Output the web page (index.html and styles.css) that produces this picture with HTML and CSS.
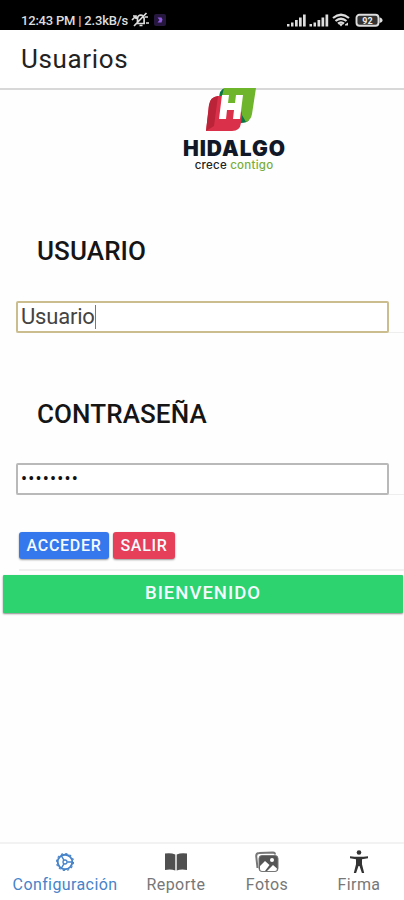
FILE: index.html
```
<!DOCTYPE html>
<html lang="es">
<head>
<meta charset="utf-8">
<title>Usuarios</title>
<link rel="stylesheet" href="styles.css">
</head>
<body>
<div class="status">
  <span class="status-text">12:43 PM | 2.3kB/s</span>
  <svg class="mute" width="19" height="16" viewBox="0 0 19 16" fill="none" stroke="#ddd" stroke-width="1.700"><path d="M5 11.500h9M6.500 11V6.500a3.300 3.300 0 0 1 6.600 0V11M8.500 13.500h3M15.500 1 3 14M1 8l3-3M2 4h3v3M14 5l3 0M15 11h3"/></svg>
  <svg class="app" width="12" height="12" viewBox="0 0 12 12"><rect width="12" height="12" rx="2" fill="#25173d"/><path d="M3.500 3.500h4l1 2-1 3h-4l2-2.500z" fill="#8c59dc"/></svg>
  <svg class="signals" width="96" height="14" viewBox="0 0 96 14">
    <g fill="#ddd"><path id="bars" d="M0 11h2.500v2.500H0zM4 9.500h2.500v4H4zM8 7h2.700v6.500H8zM12 4.500h2.700v9H12zM16 1.500h2.700v12H16z"/><use href="#bars" x="22.500"/></g>
    <g fill="none" stroke="#ddd" stroke-width="2.200"><path d="M46 5q8-6.500 16 0M48.500 8q5.500-4.500 11 0M51 10.700q3-2.500 6 0"/></g>
    <path d="m51.500 10.500 2.500 3 2.500-3zM58 11.500l3-2v3h-3z" fill="#ddd"/>
    <rect x="69.500" y="1.700" width="22" height="11" rx="3" fill="#333" stroke="#ddd" stroke-width="1.900"/><path d="M92.500 4.500q3 .5 3 2.700t-3 2.700z" fill="#ddd"/>
    <text x="80.500" y="10.500" class="charge">92</text>
  </svg>
</div>
<header><h1>Usuarios</h1></header>
<main>
  <div class="logo">
    <svg width="52" height="44" viewBox="0 0 52 44">
      <path d="M14 12q0-11 6-12h8l9 24 7 8q-2 3-8 3H16z" fill="#087344"/>
      <path d="M19 0h32l-4 26q-1 6-6 8l-4-7-2-9H22l1-10h-6z" fill="#6fb52c"/>
      <path d="M1 43 4 17q1-8 9-9h5l2 10h15l2 10-1 7q-1 8-9 8z" fill="#da3049"/>
      <path d="M1 43 4 17q1-8 9-9L9 38z" fill="#ba2338"/>
      <path d="M17 7h7l-1 8h7l1-8h7l-3 24h-7l1-9h-7l-1 9h-7z" fill="#fff"/>
    </svg>
    <div class="word">HIDALGO</div>
    <div class="slogan">crece <span>contigo</span></div>
  </div>
  <h2 class="label">USUARIO</h2>
  <div class="row"><div class="field focused">Usuario<i class="caret"></i></div></div>
  <h2 class="label second">CONTRASEÑA</h2>
  <div class="row"><div class="field password">••••••••</div></div>
  <div class="actions"><button class="primary">ACCEDER</button><button class="danger">SALIR</button></div>
  <button class="welcome">BIENVENIDO</button>
</main>
<nav>
  <a class="tab active"><svg width="20" height="20" viewBox="0 0 20 20" fill="none" stroke="#4783c9"><circle cx="10" cy="10" r="7.300" stroke-width="1.900"/><circle cx="10" cy="10" r="8.500" stroke-width="1.100" stroke-dasharray="2.200 2.250"/><circle cx="10" cy="10" r="2" stroke-width="1.300"/><path d="M12.200 10h5M8.900 8.100 6.300 3.700M8.900 11.900l-2.600 4.400" stroke-width="1.400"/></svg><span>Configuración</span></a>
  <a class="tab report"><svg width="22" height="20" viewBox="0 0 22 20" fill="#505050"><path d="M0 1.500q6-1 10.300 1v16Q6 17 0 18zM22 1.500q-6-1-10.300 1v16Q16 17 22 18z"/></svg><span>Reporte</span></a>
  <a class="tab photos"><svg width="24" height="22" viewBox="0 0 24 22"><path d="M2.500 17 1.200 5q0-3 3-3L18 1.500q2 0 2 2" fill="none" stroke="#777" stroke-width="2"/><rect x="4" y="4.500" width="19" height="16" rx="3" fill="#555" stroke="#777"/><path d="m5 15 5-5 4.500 4L10 20H7q-2 0-2-2zM12 20l6-6 4 3.500q0 2.500-2 2.500z" fill="#fff"/><circle cx="17" cy="9" r="2" fill="#fff"/></svg><span>Fotos</span></a>
  <a class="tab sign"><svg width="20" height="24" viewBox="0 0 20 24" fill="#333"><circle cx="10" cy="2.500" r="2.300"/><path d="M1 6.300q9 1 18 0v2l-6 1v5l2.200 8.700h-2.300L10.500 16h-1L7.100 23H4.800L7 14.300v-5l-6-1z"/></svg><span>Firma</span></a>
</nav>
</body>
</html>
```
FILE: styles.css
```
* { box-sizing: border-box; }
body { margin: 0; width: 404px; height: 900px; overflow: hidden; display: flex; flex-direction: column; background: #fefefe; font-family: Roboto, sans-serif; color: #151515; }
h1, h2 { margin: 0; }
svg { display: block; flex: none; }
button { border: 0; padding: 0; font: 500 16px/1 Roboto, sans-serif; color: #f5faff; }
.status { height: 30px; flex: none; background: #000; color: #ddd; display: flex; align-items: flex-start; padding: 12px 21px 0; }
.status-text { font: 500 13px/17px Roboto, sans-serif; letter-spacing: -.2px; width: 109px; white-space: nowrap; }
.mute { margin-left: 1px; }
.app { margin: 2px 0 0 4px; }
.signals { margin: 1px 0 0 auto; }
.charge { font: 700 9px Roboto, sans-serif; fill: #eee; text-anchor: middle; }
header { height: 60px; flex: none; border-bottom: 2px solid #d8d8d8; background: #fff; padding: 13px 21px 0; }
h1 { font-size: 26px; line-height: 32px; font-weight: 400; letter-spacing: .65px; color: #222; }
main { flex: 1; display: flex; flex-direction: column; }
.logo { margin: -2px 0 0 182px; width: 104px; height: 88px; position: relative; display: flex; flex-direction: column; align-items: center; }
.logo svg { margin-right: 6px; }
.word { font: 900 21px/20px Inter, sans-serif; margin-top: 7px; white-space: nowrap; letter-spacing: 1px; margin-right: -1px; color: #111827; }
.slogan { font: 500 11.500px/12px Inter, sans-serif; letter-spacing: .25px; white-space: nowrap; color: #222; }
.slogan span { color: #78ad3b; }
.label { margin: 59px 0 0 37px; height: 32px; font-size: 26px; line-height: 32px; font-weight: 500; letter-spacing: .1px; color: #151515; }
.row { margin: 34px 0 0 16px; height: 32px; border-bottom: 1px solid #eee; }
.field { width: 373px; height: 32px; border: 2px solid #b9b9b9; border-radius: 2px; background: #fff; padding-left: 3px; font-size: 22px; line-height: 28px; letter-spacing: -.2px; color: #444; display: flex; align-items: center; }
.focused { border-color: #cbbd8e; }
.caret { width: 1px; height: 24px; background: #777; }
.label.second { margin-top: 65px; }
.label.second + .row { margin-top: 33px; }
.password { color: #111; font-size: 18px; letter-spacing: 1.180px; }
.actions { display: flex; gap: 4px; margin: 37px 0 0 19px; height: 39px; border-bottom: 2px solid #f0f0f0; }
.actions button { height: 27px; border-radius: 3px; letter-spacing: .7px; box-shadow: 0 1px 2px #999; }
.primary { width: 90px; background: #3578ed; }
.danger { width: 62px; background: #e53f59; }
.welcome { margin: 4px 1px 0 3px; height: 38px; padding-bottom: 2px; background: #2dd36f; font-size: 18.500px; letter-spacing: 1px; border-radius: 1px; box-shadow: 0 1px 2px #888; }
nav { height: 58px; flex: none; border-top: 2px solid #f2f2f2; background: #fff; display: grid; grid-template-columns: 130px 92px 90px 92px; }
.tab { display: flex; flex-direction: column; align-items: center; color: #777; font-size: 16px; line-height: 20px; letter-spacing: .4px; }
.tab svg { height: 24px; margin-top: 6px; }
.tab span { margin-top: 1px; }
.active { color: #4783c9; }
.sign { padding-left: 2px; }
```
